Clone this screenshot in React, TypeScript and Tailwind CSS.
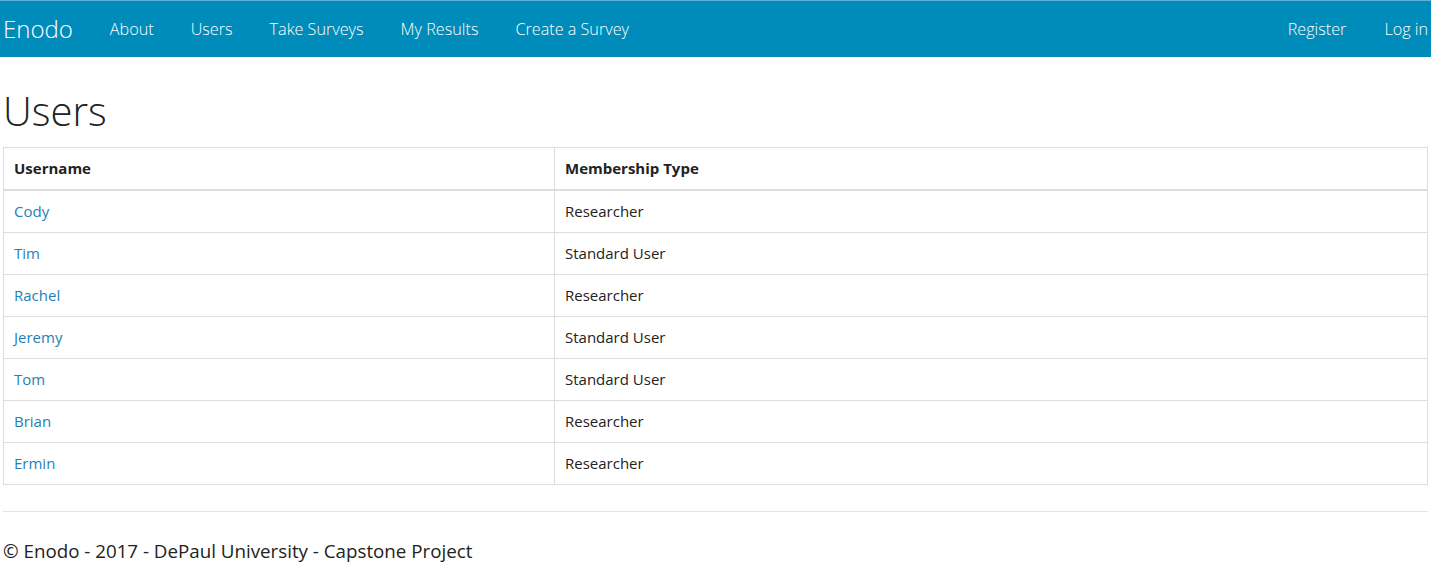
const navLinks = ["About", "Users", "Take Surveys", "My Results", "Create a Survey"];

const users = [
  { name: "Cody", type: "Researcher" },
  { name: "Tim", type: "Standard User" },
  { name: "Rachel", type: "Researcher" },
  { name: "Jeremy", type: "Standard User" },
  { name: "Tom", type: "Standard User" },
  { name: "Brian", type: "Researcher" },
  { name: "Ermin", type: "Researcher" },
];

export default function App() {
  return (
    <div className="min-h-screen bg-white text-[#222] font-['Open_Sans',sans-serif]">
      {/* navbar */}
      <nav className="h-[57px] bg-[#008cba] border-t border-[#5fb0d4] flex items-center justify-between px-[3px] text-white">
        <div className="flex items-center">
          <a className="text-[24px] font-light mr-[37px] leading-none">Enodo</a>
          <ul className="flex items-center gap-[37px] text-[16.2px] font-light">
            {navLinks.map((l) => (
              <li key={l}>{l}</li>
            ))}
          </ul>
        </div>
        <ul className="flex items-center gap-[38px] text-[16.2px] font-light">
          <li>Register</li>
          <li>Log in</li>
        </ul>
      </nav>

      <main className="px-[3px]">
        <h1 className="text-[40px] font-light leading-none mt-[34px] mb-[16px] text-[#222]">Users</h1>

        <table className="w-full border-collapse border border-[#ddd] text-[15px]">
          <thead>
            <tr>
              <th className="w-[551px] text-left font-bold px-[10px] py-[10px] leading-[21px] border border-[#ddd] border-b-2">Username</th>
              <th className="text-left font-bold px-[10px] py-[10px] leading-[21px] border border-[#ddd] border-b-2">Membership Type</th>
            </tr>
          </thead>
          <tbody>
            {users.map((u) => (
              <tr key={u.name}>
                <td className="px-[10px] py-[10px] leading-[21px] border border-[#ddd]">
                  <a className="text-[#2780b5]">{u.name}</a>
                </td>
                <td className="px-[10px] py-[10px] leading-[21px] border border-[#ddd]">{u.type}</td>
              </tr>
            ))}
          </tbody>
        </table>

        <hr className="mt-[26px] border-t border-[#e5e5e5]" />
        <footer className="pt-[25px] text-[18.75px] text-[#222]">© Enodo - 2017 - DePaul University - Capstone Project</footer>
      </main>
    </div>
  );
}
